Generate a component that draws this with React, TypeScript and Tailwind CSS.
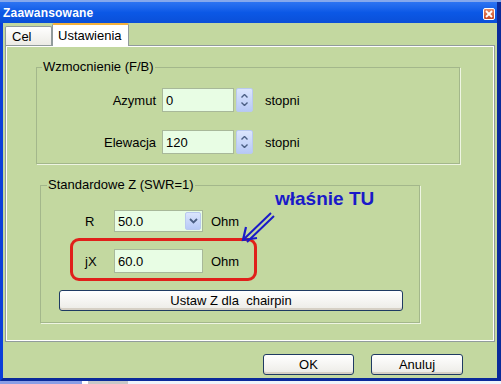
const green = "bg-[#c3d8a0]"

function SpinButton() {
  return (
    <div className="ml-[2px] w-[17px] h-[24px] flex flex-col items-center justify-center gap-[4px] rounded-[2px] border border-[#b9c9ef] bg-gradient-to-b from-[#dbe5fd] to-[#b7c9f6]">
      <svg width="7" height="4" viewBox="0 0 7 4"><path d="M0.5 3.5 L3.5 0.5 L6.5 3.5" stroke="#4b5f84" strokeWidth="1.4" fill="none" /></svg>
      <svg width="7" height="4" viewBox="0 0 7 4"><path d="M0.5 0.5 L3.5 3.5 L6.5 0.5" stroke="#4b5f84" strokeWidth="1.4" fill="none" /></svg>
    </div>
  )
}

function XpButton({ label, w }: { label: string; w: string }) {
  return (
    <div className={`${w} h-[21px] flex items-center justify-center rounded-[3px] border border-[#1f3b63] bg-gradient-to-b from-white to-[#ecebe6] shadow-[inset_0_-2px_0_#d6d0c5]`}>
      {label}
    </div>
  )
}

export default function App() {
  return (
    <div className="relative w-[501px] h-[384px] overflow-hidden bg-white font-['Liberation_Sans',Arial,sans-serif] text-[13px] leading-none text-black">
      <div className="flex flex-col h-full">
        {/* title bar */}
        <div className="h-[2px] bg-[#86a8ec]" />
        <div className="h-[21px] flex items-center justify-between pl-[3px] pr-[2px] bg-gradient-to-b from-[#2d74f2] via-[#0b58e6] to-[#0a4fd8] border-r-[4px] border-r-[#0a2a9a]">
          <span className="text-white font-bold text-[12px] tracking-[0.2px]">Zaawansowane</span>
          <div className="w-[12px] h-[12px] mt-[3px] flex items-center justify-center rounded-[2px] border border-white bg-gradient-to-b from-[#e88a62] to-[#c84a24]">
            <svg width="8" height="8" viewBox="0 0 8 8"><path d="M1 1 L7 7 M7 1 L1 7" stroke="white" strokeWidth="1.8" /></svg>
          </div>
        </div>

        {/* window body */}
        <div className={`flex-1 flex flex-col ${green} border-l-[3px] border-r-[4px] border-b-[3px] border-l-[#0b3fd9] border-r-[#0a2a9a] border-b-[#0a2a9a]`}>
          {/* tabs */}
          <div className="flex items-end h-[22px] pl-[2px]">
            <div className="w-[47px] h-[19px] flex items-center pl-[6px] border border-b-0 border-[#919b9c] bg-gradient-to-b from-white to-[#ecebe5] rounded-t-[2px]">Cel</div>
            <div className="relative z-10 w-[77px] h-[23px] -mb-[1px] flex items-center pl-[5px] bg-white border-x border-[#919b9c] border-t-[2px] border-t-[#f4b13c] rounded-t-[2px]">Ustawienia</div>
          </div>

          {/* tab panel */}
          <div className={`ml-[2px] w-[490px] h-[297px] flex flex-col items-start pl-[30px] pt-[14px] border border-[#919b9c] shadow-[inset_1px_1px_0_#ffffff,inset_-1px_-1px_0_#ffffff] ${green}`}>
            <fieldset className="w-[424px] h-[104px] border border-[#a3b78b] shadow-[1px_1px_0_#eef5e2]">
              <legend className="ml-[5px] px-[1px] leading-[14px]">Wzmocnienie (F/B)</legend>
              <div className="flex flex-col gap-[18px] pt-[14px]">
                {[['Azymut', '0'], ['Elewacja', '120']].map(([l, v]) => (
                  <div key={l} className="flex items-center">
                    <div className="w-[119px] text-right">{l}</div>
                    <div className="ml-[6px] w-[72px] h-[24px] flex items-center pl-[3px] bg-[#e8fde4] border border-[#a8b89a]">{v}</div>
                    <SpinButton />
                    <div className="ml-[12px]">stopni</div>
                  </div>
                ))}
              </div>
            </fieldset>

            <fieldset className="ml-[4px] mt-[14px] w-[380px] h-[145px] border border-[#a3b78b] shadow-[1px_1px_0_#eef5e2]">
              <legend className="ml-[6px] px-[1px] leading-[14px]">Standardowe Z (SWR=1)</legend>
              <div className="flex flex-col items-start pt-[18px]">
                <div className="flex items-center">
                  <div className="ml-[44px] w-[29px]">R</div>
                  <div className="w-[89px] h-[22px] flex items-center justify-between pl-[3px] pr-[1px] bg-[#e8fde4] border border-[#a8b89a]">
                    <span>50.0</span>
                    <div className="w-[16px] h-[18px] flex items-center justify-center rounded-[2px] bg-gradient-to-b from-[#dbe5fd] to-[#b7c9f6] border border-[#b9c9ef]">
                      <svg width="9" height="6" viewBox="0 0 9 6"><path d="M1 1 L4.5 4.5 L8 1" stroke="#4b5f84" strokeWidth="1.8" fill="none" /></svg>
                    </div>
                  </div>
                  <div className="ml-[8px]">Ohm</div>
                </div>

                <div className="ml-[29px] mt-[6px] w-[187px] flex items-center pl-[12px] pt-[8px] pb-[5px] border-[3px] border-[#e0201a] rounded-[9px]">
                  <div className="w-[29px]">jX</div>
                  <div className="w-[89px] h-[24px] flex items-center pl-[3px] bg-[#e8fde4] border border-[#a8b89a]">60.0</div>
                  <div className="ml-[8px]">Ohm</div>
                </div>

                <div className="ml-[18px] mt-[9px]">
                  <XpButton label="Ustaw Z dla  chairpin" w="w-[344px] whitespace-pre" />
                </div>
              </div>
            </fieldset>
          </div>

          {/* bottom buttons */}
          <div className="flex justify-end gap-[17px] pr-[34px] mt-[12px]">
            <XpButton label="OK" w="w-[91px]" />
            <XpButton label="Anuluj" w="w-[92px]" />
          </div>
        </div>

        {/* taskbar strip */}
        <div className="h-[3px] flex">
          <div className="w-[82px] bg-[#8a9ee6]" />
          <div className="w-[6px] bg-white" />
          <div className="w-[40px] bg-[#c8c8c8]" />
          <div className="flex-1 bg-[#eef4fb]" />
        </div>
      </div>

      {/* annotation */}
      <div className="absolute left-[275px] top-[189px] text-[19px] font-bold text-[#1a1ac8]">właśnie TU</div>
      <svg className="absolute left-[238px] top-[208px]" width="40" height="38" viewBox="0 0 40 38">
        <path d="M33 5 L6 31 M36 8 L9 34" stroke="#1a1ac8" strokeWidth="2" fill="none" />
        <path d="M8 19 L5 32 L19 30" stroke="#1a1ac8" strokeWidth="2.2" fill="none" />
      </svg>
    </div>
  )
}
